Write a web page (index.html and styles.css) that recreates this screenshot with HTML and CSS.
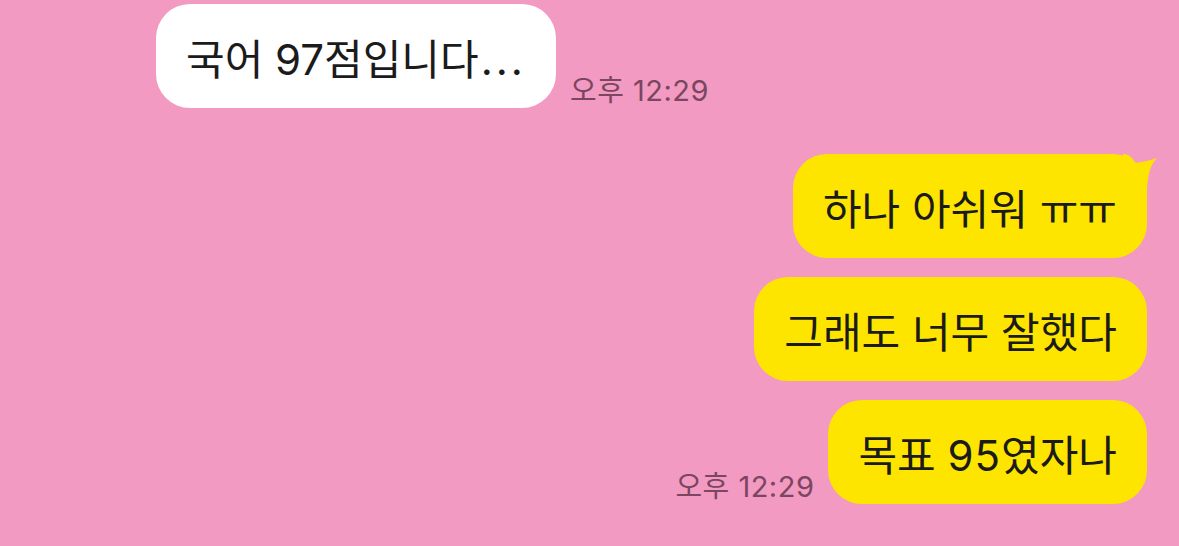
FILE: index.html
```html
<!DOCTYPE html>
<html lang="ko">
<head>
  <meta charset="UTF-8" />
  <title>채팅</title>
  <link rel="stylesheet" href="styles.css">
</head>
<body>
  <div class="chat">
    <!-- 받은 메시지 -->
    <div class="row left">
      <div class="bubble white">
        <p class="text">국어 97점입니다<span class="dots">...</span></p>
      </div>
      <span class="time">오후 12:29</span>
    </div>

    <!-- 보낸 메시지 -->
    <div class="group">
      <div class="row right">
        <div class="bubble yellow">
          <p class="text">하나 아쉬워 ㅠㅠ</p>
          <svg class="tail" width="34" height="40" viewBox="0 0 34 40">
            <path d="M0 0 C6 0 10 4 12 9 C20 8 28 6 34 4 C28 10 24 20 24 40 L0 40 Z" fill="#fee500"/>
          </svg>
        </div>
      </div>
      <div class="row right">
        <div class="bubble yellow">
          <p class="text">그래도 너무 잘했다</p>
        </div>
      </div>
      <div class="row right">
        <span class="time">오후 12:29</span>
        <div class="bubble yellow">
          <p class="text">목표 <span class="num">95</span>였자나</p>
        </div>
      </div>
    </div>
  </div>
</body>
</html>
```

FILE: styles.css
```css
* {
  box-sizing: border-box;
  margin: 0;
  padding: 0;
}
body {
  background: #f29ac2;
  font-family: 'Inter', 'Noto Sans CJK KR', sans-serif;
  color: #1b1b1b;
  width: 1179px;
  height: 546px;
  overflow: hidden;
}
.chat {
  display: flex;
  flex-direction: column;
  gap: 46px;
  padding-top: 4px;
}
.group {
  display: flex;
  flex-direction: column;
  gap: 19px;
}
.row {
  display: flex;
  align-items: flex-end;
  gap: 14px;
}
.left {
  padding-left: 156px;
}
.right {
  justify-content: flex-end;
  padding-right: 32px;
}
.bubble {
  position: relative;
  height: 104px;
  padding: 0 30px;
  display: flex;
  align-items: center;
  border-radius: 34px;
}
.text {
  font-size: 42px;
  white-space: nowrap;
}
.white {
  background: #ffffff;
}
.yellow {
  background: #fee500;
}
.dots {
  letter-spacing: 3px;
  padding-left: 2px;
}
.num {
  letter-spacing: 1px;
}
.tail {
  position: absolute;
  top: 0;
  right: -10px;
}
.time {
  font-size: 29px;
  letter-spacing: 0.5px;
  color: #7a4660;
  line-height: 1;
  padding-bottom: 3px;
}
```
